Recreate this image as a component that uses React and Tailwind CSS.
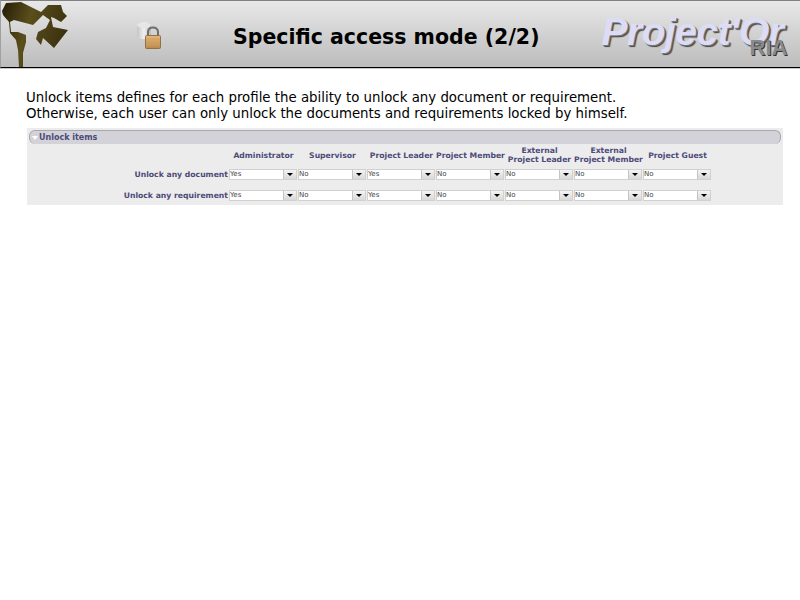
import React from 'react';

const COLUMNS = [
  ['Administrator'],
  ['Supervisor'],
  ['Project Leader'],
  ['Project Member'],
  ['External', 'Project Leader'],
  ['External', 'Project Member'],
  ['Project Guest'],
];

const ROWS = [
  { label: 'Unlock any document', values: ['Yes', 'No', 'Yes', 'No', 'No', 'No', 'No'] },
  { label: 'Unlock any requirement', values: ['Yes', 'No', 'Yes', 'No', 'No', 'No', 'No'] },
];

const CameraLogo = () => (
  <svg width="68" height="66" viewBox="0 0 68 66" className="shrink-0 block">
    <defs>
      <linearGradient id="cam" x1="0" y1="0" x2="1" y2="0.3">
        <stop offset="0" stopColor="#241c06" />
        <stop offset="0.45" stopColor="#5a4e1c" />
        <stop offset="1" stopColor="#3c3210" />
      </linearGradient>
    </defs>
    <path
      fill="url(#cam)"
      d="M1 10 L5 2 L20 1 L40 11 L47 4 L60 4 L62 11 L66 15 L60 21 L53 17 L50 16 L52 26 L67 29 L53 47 L42 37 L40 44 L35 38 L37 31 L45 27 L49 19 L42 14 L32 24 L13 19 L9 21 L10 31 L17 31 L25 34 L25 41 L22 52 L22 66 L18 66 L17 49 L15 39 L9 32 L8 21 L2 14 Z"
    />
  </svg>
);

const LockIcon = () => (
  <svg width="26" height="28" viewBox="0 0 26 28" className="shrink-0 block">
    <defs>
      <linearGradient id="disk" x1="0" y1="0" x2="1" y2="0">
        <stop offset="0" stopColor="#c4c4c4" />
        <stop offset="0.5" stopColor="#f0f0f0" />
        <stop offset="1" stopColor="#b8b8b8" />
      </linearGradient>
      <linearGradient id="body" x1="0" y1="0" x2="0" y2="1">
        <stop offset="0" stopColor="#e8b878" />
        <stop offset="1" stopColor="#b98848" />
      </linearGradient>
    </defs>
    <path d="M1 4 C1 0 15 0 15 4 L15 15 C15 19 1 19 1 15 Z" fill="url(#disk)" />
    <ellipse cx="8" cy="4" rx="7" ry="3" fill="#e6e6e6" />
    <path d="M12 15 V11 C12 5 22 5 22 11 V15" fill="none" stroke="#6d6d6d" strokeWidth="2" />
    <rect x="9.5" y="14.5" width="15" height="13" rx="1" fill="url(#body)" stroke="#8f7048" />
    <path d="M10.5 18 H23.5 M10.5 21 H23.5 M10.5 24 H23.5" stroke="#cf9f62" strokeWidth="1" />
  </svg>
);

const FakeSelect = ({ value }) => (
  <div className="w-[68px] h-[11px] flex bg-white border border-[#d0d0d0] text-[7px] leading-[9px] text-[#444]">
    <div className="flex-1 overflow-hidden">{value}</div>
    <div className="w-[13px] flex items-center justify-center bg-gradient-to-b from-[#f4f4f4] to-[#d8d8d8] border-l border-[#c4c4c4]">
      <div className="w-0 h-0 border-l-[3px] border-r-[3px] border-t-[3px] border-l-transparent border-r-transparent border-t-black" />
    </div>
  </div>
);

export default function App() {
  return (
    <div className="w-[800px] h-[600px] bg-white overflow-hidden font-['DejaVu_Sans',sans-serif]">
      <header className="h-[68px] flex items-center bg-gradient-to-b from-[#e8e8e8] to-[#bcbcbc] border-t border-t-[#808080] border-l border-l-[#a0a0a0] border-b border-b-black shadow-[0_1px_0_#c8c8c8]">
        <CameraLogo />
        <div className="ml-[67px] mt-[2px]">
          <LockIcon />
        </div>
        <h1 className="ml-[71px] mt-[6px] text-[20.5px] font-bold text-black whitespace-nowrap">Specific access mode (2/2)</h1>
        <div className="relative ml-[62px] mt-[-6px] font-['Liberation_Sans',sans-serif] italic font-bold text-[39px] leading-none tracking-[-0.5px] text-[#dcdcf6] [text-shadow:1px_1px_0_#777,2px_2px_1px_#444] whitespace-nowrap">
          Project'Or
          <span className="absolute left-[148px] top-[25px] not-italic text-[22px] tracking-normal text-[#8a8a8a] [text-shadow:1px_1px_0_#333]">RIA</span>
        </div>
      </header>

      <div className="pl-[26px] pt-[22px] text-[13.33px] leading-[16px] text-black">
        <p className="whitespace-nowrap">Unlock items defines for each profile the ability to unlock any document or requirement.</p>
        <p className="whitespace-nowrap">Otherwise, each user can only unlock the documents and requirements locked by himself.</p>
      </div>

      <section className="ml-[27px] mt-[6px] w-[756px] h-[77px] bg-[#ececec] pt-[2px] px-[2px]">
        <div className="h-[14px] flex items-center pl-[2px] bg-[#d2d2d8] border-t border-l border-r border-[#a8a8b0] rounded-[6px]">
          <span className="w-0 h-0 border-l-[3px] border-r-[3px] border-t-[4px] border-l-transparent border-r-transparent border-t-white" />
          <span className="ml-[1px] text-[8px] font-bold text-[#4d4a78]">Unlock items</span>
        </div>

        <div className="flex pl-[200px] h-[25px] pb-[3px] items-center">
          {COLUMNS.map((lines, i) => (
            <div key={i} className="w-[69px] text-center text-[7.7px] leading-[9px] font-bold text-[#4d4a78] whitespace-nowrap">
              {lines.map((line) => (
                <div key={line}>{line}</div>
              ))}
            </div>
          ))}
        </div>

        <div className="flex flex-col gap-[10px]">
          {ROWS.map((row) => (
            <div key={row.label} className="flex items-center h-[11px]">
              <div className="w-[199px] text-right text-[7.7px] font-bold text-[#4d4a78] whitespace-nowrap">{row.label}</div>
              <div className="flex gap-px ml-px">
                {row.values.map((value, i) => (
                  <FakeSelect key={i} value={value} />
                ))}
              </div>
            </div>
          ))}
        </div>
      </section>
    </div>
  );
}
